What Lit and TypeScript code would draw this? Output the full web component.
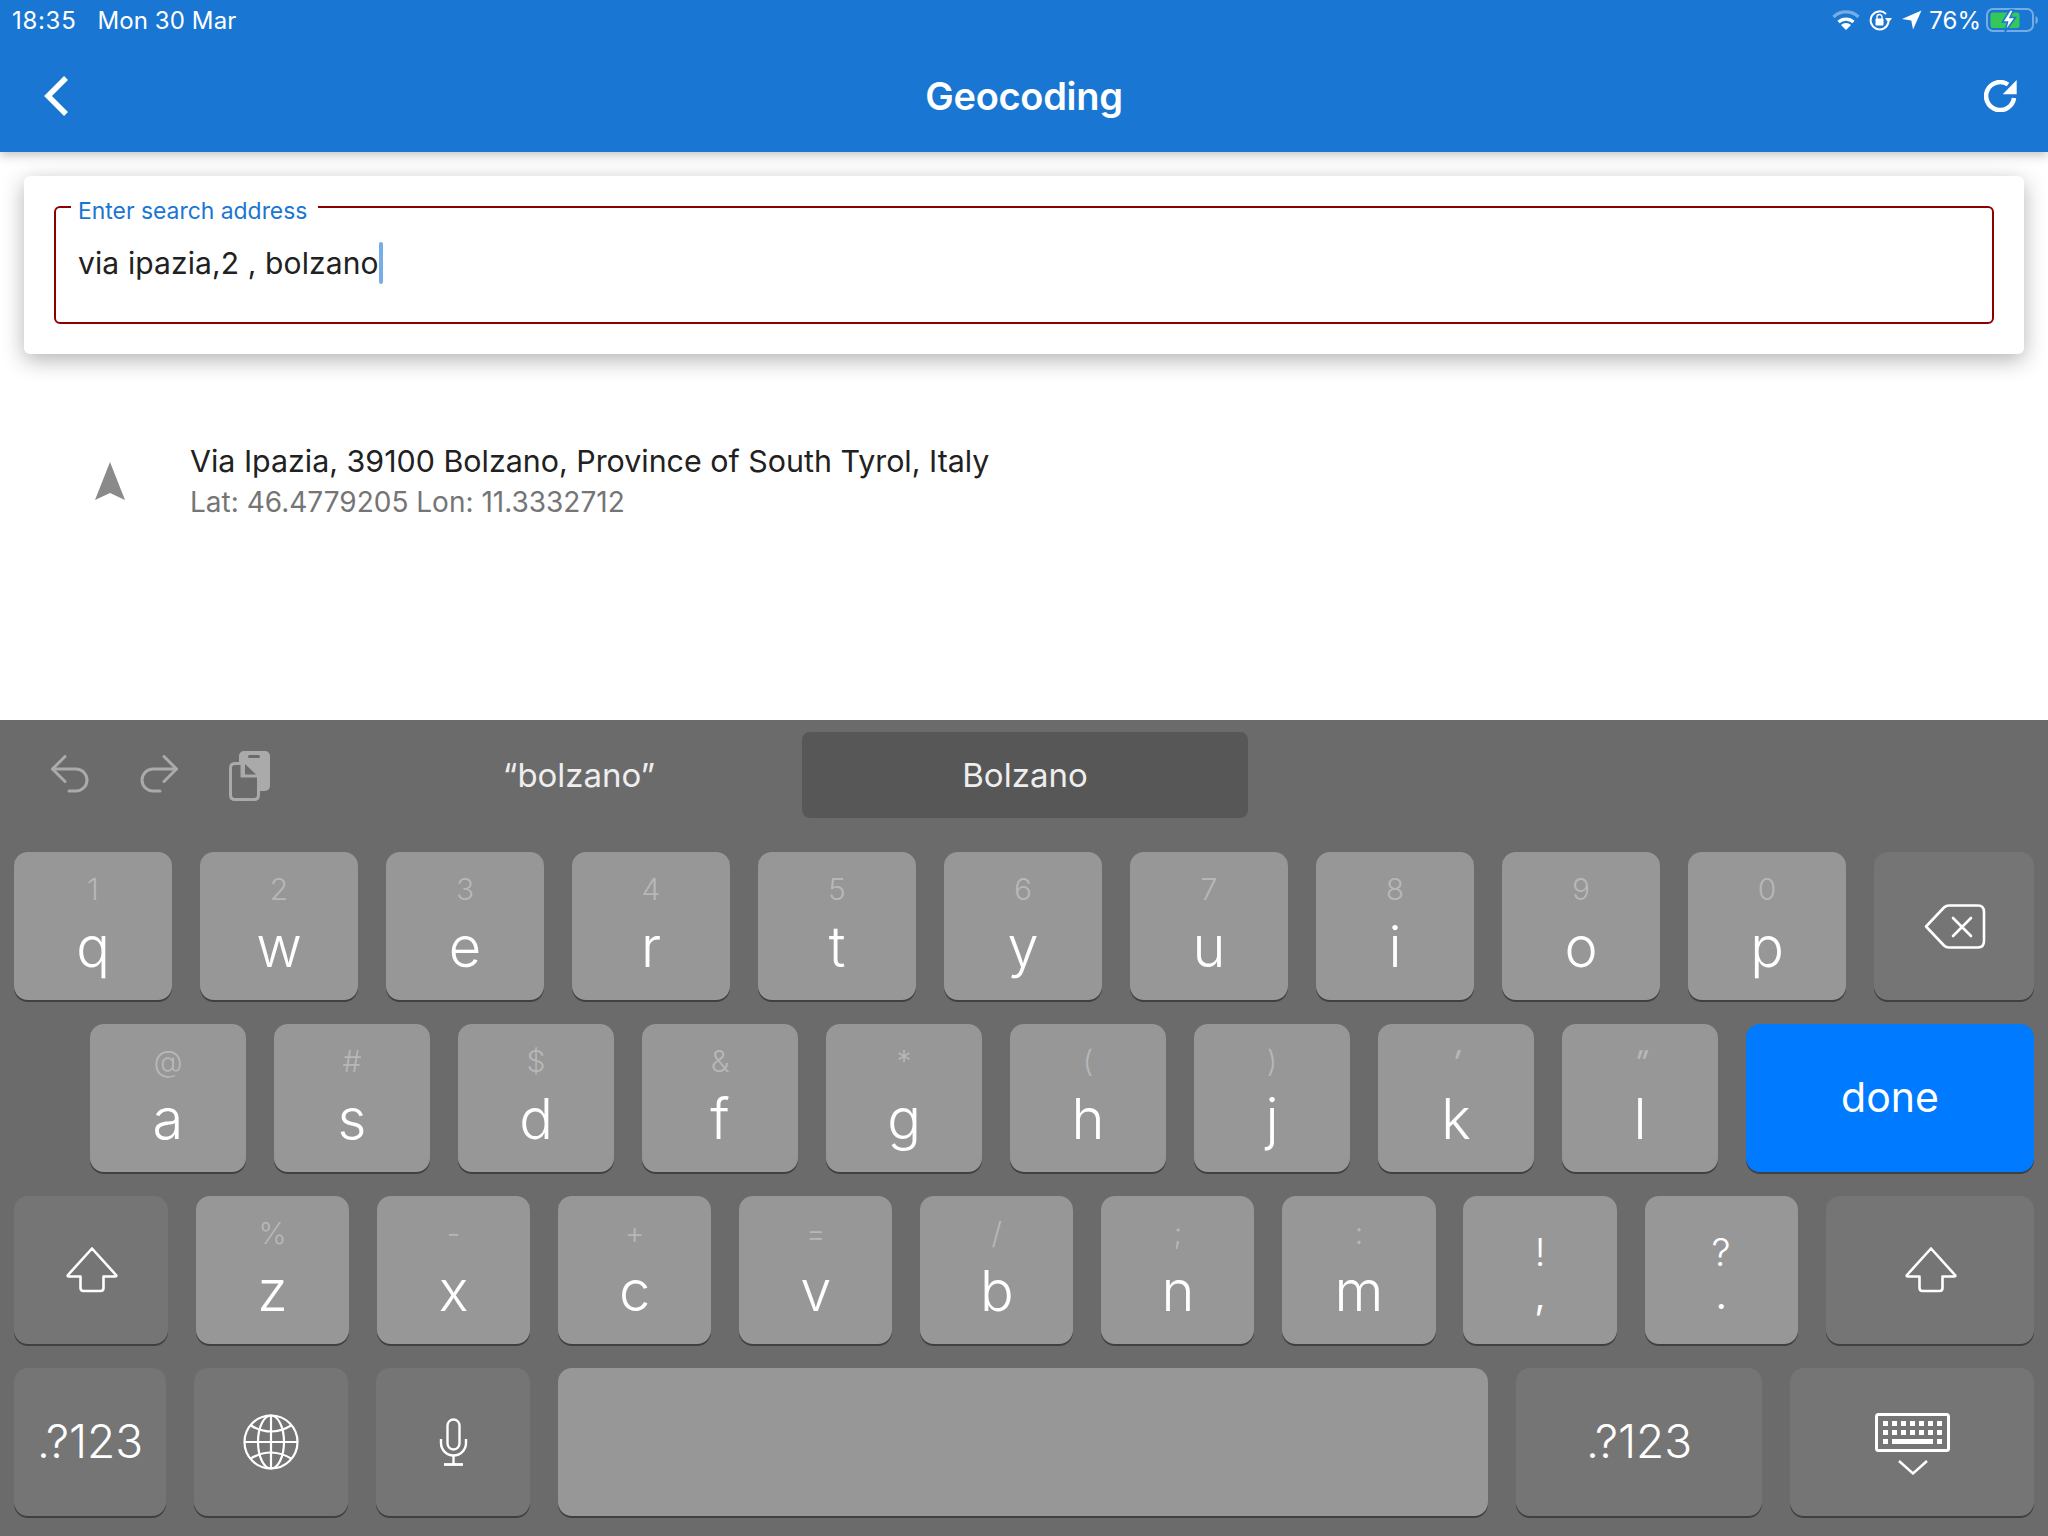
import { LitElement, html, css, svg } from 'lit';
import { customElement } from 'lit/decorators.js';

const ROW1 = [['1', 'q'], ['2', 'w'], ['3', 'e'], ['4', 'r'], ['5', 't'], ['6', 'y'], ['7', 'u'], ['8', 'i'], ['9', 'o'], ['0', 'p']];
const ROW2 = [['@', 'a'], ['#', 's'], ['$', 'd'], ['&', 'f'], ['*', 'g'], ['(', 'h'], [')', 'j'], ["'", 'k'], ['"', 'l']];
const ROW3 = [['%', 'z'], ['-', 'x'], ['+', 'c'], ['=', 'v'], ['/', 'b'], [';', 'n'], [':', 'm']];

const shiftIcon = html`<svg class="shift" width="52" height="46" viewBox="0 0 52 46" fill="none" stroke="#fff" stroke-width="2.6" stroke-linejoin="round">
  <path d="M26 1.5 L50 28 Q51 29.5 49 29.5 H37.5 V41 Q37.5 44 34.5 44 H17.5 Q14.5 44 14.5 41 V29.5 H3 Q1 29.5 2 28 Z" />
</svg>`;

const keyboardDots = [0, 1, 2, 3, 4, 5, 6].flatMap((i) => [
  svg`<rect x=${8 + i * 9} y="8" width="5" height="5" />`,
  svg`<rect x=${8 + i * 9} y="17" width="5" height="5" />`,
]);

@customElement('app-root')
export class AppRoot extends LitElement {
  static styles = css`
    :host {
      display: block;
      font-family: Inter, 'Liberation Sans', sans-serif;
    }

    .page {
      display: flex;
      flex-direction: column;
      height: 1536px;
      background: #fff;
    }

    /* app bar */
    .appbar {
      position: relative;
      height: 152px;
      background: #1976d2;
      color: #fff;
      box-shadow: 0 3px 10px rgba(0, 0, 0, 0.25);
    }
    .status {
      display: flex;
      align-items: center;
      height: 40px;
      padding: 0 10px 0 12px;
      font-size: 24px;
      letter-spacing: 0.1px;
    }
    .status .time {
      letter-spacing: 0.7px;
    }
    .status .date {
      margin-left: 21px;
    }
    .status .right {
      display: flex;
      align-items: center;
      margin-left: auto;
    }
    .status .pct {
      margin: 0 5px 0 7px;
      letter-spacing: 0;
    }
    .status .lock {
      margin-left: 9px;
    }
    .status .loc {
      margin-left: 10px;
    }
    .toolbar {
      display: grid;
      grid-template-columns: 1fr auto 1fr;
      align-items: center;
      height: 112px;
      padding: 0 31px;
    }
    .toolbar .back {
      margin-left: 13px;
    }
    .toolbar .title {
      font-size: 38px;
      font-weight: 600;
      letter-spacing: -0.3px;
    }
    .toolbar .refresh {
      justify-self: end;
    }
    svg {
      display: block;
    }

    /* search */
    .body {
      flex: 1;
    }
    .card {
      margin: 24px 24px 0;
      padding: 30px;
      height: 178px;
      box-sizing: border-box;
      background: #fff;
      border-radius: 6px;
      box-shadow: 0 6px 22px rgba(0, 0, 0, 0.3);
    }
    .field {
      position: relative;
      display: flex;
      align-items: center;
      height: 118px;
      box-sizing: border-box;
      padding: 0 22px;
      border: 2px solid #8b0000;
      border-radius: 6px;
      font-size: 30px;
      letter-spacing: 0.12px;
      color: #212121;
    }
    .field .label {
      position: absolute;
      left: 15px;
      top: -12px;
      padding: 0 11px 0 7px;
      background: #fff;
      font-size: 22.9px;
      letter-spacing: 0;
      line-height: 30px;
      color: #1976d2;
    }
    .field .value {
      display: flex;
      align-items: center;
      margin-top: -4px;
    }
    .caret {
      width: 4px;
      height: 42px;
      border-radius: 2px;
      background: #78aee8;
    }

    .result {
      display: flex;
      align-items: center;
      margin-top: 87px;
      padding-left: 95px;
    }
    .result .nav {
      margin: 0 65px 0 0;
    }
    .result .name {
      font-size: 30.4px;
      line-height: 41px;
      color: #212121;
    }
    .result .coords {
      font-size: 28px;
      line-height: 40px;
      color: #757575;
    }

    /* keyboard */
    .keyboard {
      display: flex;
      flex-direction: column;
      gap: 24px;
      height: 816px;
      box-sizing: border-box;
      padding: 0 14px 20px;
      background: #6b6b6b;
      font-weight: 300;
      color: #fff;
    }
    .assist {
      display: flex;
      height: 108px;
      margin: 0 -14px;
      padding-top: 12px;
      box-sizing: border-box;
    }
    .assist .tools {
      position: relative;
      width: 356px;
    }
    .tools .undo {
      position: absolute;
      left: 51px;
      top: 23px;
    }
    .tools .redo {
      position: absolute;
      left: 139px;
      top: 23px;
    }
    .tools .paste {
      position: absolute;
      left: 229px;
      top: 19px;
    }
    .suggestion {
      display: flex;
      align-items: center;
      justify-content: center;
      width: 446px;
      height: 86px;
      border-radius: 8px;
      font-size: 33px;
      font-weight: 400;
      color: #eee;
    }
    .suggestion.active {
      background: #585757;
    }
    .row {
      display: grid;
      gap: 28px;
      height: 148px;
    }
    .row1 {
      grid-template-columns: repeat(10, 158px) 160px;
    }
    .row2 {
      grid-template-columns: repeat(9, 156px) 288px;
      padding-left: 76px;
    }
    .row3 {
      grid-template-columns: 154px repeat(9, 153.2px) 208.2px;
      gap: 27.9px;
    }
    .row4 {
      grid-template-columns: 152px 154px 154px 930px 246px 244px;
    }
    .key {
      display: flex;
      flex-direction: column;
      align-items: center;
      box-sizing: border-box;
      padding-top: 22px;
      border-radius: 14px;
      background: #979797;
      box-shadow: 0 2px 0 #404040;
    }
    .key .hint {
      height: 30px;
      font-size: 30px;
      line-height: 30px;
      color: rgba(255, 255, 255, 0.32);
    }
    .key .hint.slant {
      font-weight: 500;
      transform: skewX(-18deg);
    }
    .key .letter {
      height: 60px;
      margin-top: 13px;
      font-size: 56px;
      line-height: 60px;
    }
    .key.punct {
      padding-top: 35px;
      font-size: 38px;
      line-height: 42px;
    }
    .key.punct .low {
      margin-top: 1px;
      font-weight: 400;
    }
    .key.fn,
    .key.done {
      justify-content: center;
      padding-top: 0;
      padding-bottom: 2px;
      font-size: 46px;
    }
    .key.fn {
      background: #757575;
    }
    .key.done {
      background: #007aff;
      font-weight: 400;
      font-size: 41px;
    }
    .key.plain {
      background: #979797;
    }
    .shift {
      margin: 2px 0 0 2px;
    }
    .backspace {
      margin: 4px 0 0 2px;
    }
    .kbd-icon {
      display: flex;
      flex-direction: column;
      align-items: center;
      gap: 8px;
      margin: 5px 0 0 1px;
    }
    .globe,
    .mic {
      margin-top: 2px;
    }
  `;

  renderLetter([hint, letter]: string[]) {
    const slanted = hint === "'" || hint === '"';
    return html`<div class="key">
      <span class="hint ${slanted ? 'slant' : ''}">${hint}</span>
      <span class="letter">${letter}</span>
    </div>`;
  }

  renderStatus() {
    return html`<div class="status">
      <span class="time">18:35</span>
      <span class="date">Mon 30 Mar</span>
      <div class="right">
        <svg width="28" height="21" viewBox="0 0 28 21" fill="none" stroke="#fff" stroke-width="3.2">
          <path d="M1.5 7 A18 18 0 0 1 26.5 7" opacity="0.4" />
          <path d="M6.5 12 A11 11 0 0 1 21.5 12" />
          <path d="M14 20 L9 15 A7 7 0 0 1 19 15 Z" fill="#fff" stroke="none" />
        </svg>
        <svg class="lock" width="23" height="21" viewBox="0 0 23 21" fill="none" stroke="#fff" stroke-width="2">
          <path d="M19.5 12 A9 9 0 1 1 17 4" />
          <path d="M16 8 H23 L19.5 13 Z" fill="#fff" stroke="none" />
          <rect x="6.5" y="8.5" width="8" height="7" rx="1" fill="#fff" stroke="none" />
          <path d="M8 9 V7 A2.5 2.5 0 0 1 13 7 V9" stroke-width="1.4" />
        </svg>
        <svg class="loc" width="20" height="20" viewBox="0 0 19 19">
          <path d="M0 8.5 L18.5 0.5 L10.5 18.5 L8.8 10 Z" fill="#fff" />
        </svg>
        <span class="pct">76%</span>
        <svg width="52" height="26" viewBox="0 0 52 26" fill="none">
          <rect x="1" y="2" width="46" height="22" rx="6" stroke="#fff" stroke-opacity="0.4" stroke-width="2" />
          <rect x="4.5" y="5.5" width="29" height="15.5" rx="2.5" fill="#34c759" />
          <path d="M49.5 9 Q52 10 52 13 Q52 16 49.5 17 Z" fill="#fff" fill-opacity="0.4" />
          <path d="M24 3 L16.5 15 H21.5 L19 25 L29.5 10.5 H24 L27.5 3 Z" fill="#fff" stroke="#1976d2" stroke-width="1.5" />
        </svg>
      </div>
    </div>`;
  }

  render() {
    return html`<div class="page">
      <header class="appbar">
        ${this.renderStatus()}
        <div class="toolbar">
          <svg class="back" width="24" height="40" viewBox="0 0 24 40" fill="none" stroke="#fff" stroke-width="5.5">
            <path d="M22 2 L4 20 L22 38" />
          </svg>
          <span class="title">Geocoding</span>
          <svg class="refresh" width="33" height="32" viewBox="0 0 33 32" fill="none">
            <path d="M24 4.5 A14 14 0 1 0 30 18" stroke="#fff" stroke-width="4.5" />
            <path d="M32.7 0 V14.3 H18.7 Z" fill="#fff" />
          </svg>
        </div>
      </header>

      <main class="body">
        <div class="card">
          <div class="field">
            <span class="label">Enter search address</span>
            <div class="value"><span>via ipazia,2 , bolzano</span><span class="caret"></span></div>
          </div>
        </div>
        <div class="result">
          <svg class="nav" width="30" height="40" viewBox="0 0 30 40">
            <path d="M15 0 L30 38 L15 31 L0 38 Z" fill="#8a8a8a" />
          </svg>
          <div>
            <div class="name">Via Ipazia, 39100 Bolzano, Province of South Tyrol, Italy</div>
            <div class="coords">Lat: 46.4779205 Lon: 11.3332712</div>
          </div>
        </div>
      </main>

      <section class="keyboard">
        <div class="assist">
          <div class="tools">
            <svg class="undo" width="39" height="38" viewBox="0 0 39 38" fill="none" stroke="#aaa" stroke-width="3" stroke-linecap="round" stroke-linejoin="round">
              <path d="M14 1.5 L1.5 14 L14 26.5" />
              <path d="M1.5 14 H25 A11 11 0 0 1 25 36 H18" />
            </svg>
            <svg class="redo" width="39" height="38" viewBox="0 0 39 38" fill="none" stroke="#aaa" stroke-width="3" stroke-linecap="round" stroke-linejoin="round">
              <path d="M25 1.5 L37.5 14 L25 26.5" />
              <path d="M37.5 14 H14 A11 11 0 0 0 14 36 H21" />
            </svg>
            <svg class="paste" width="42" height="51" viewBox="0 0 42 51">
              <rect x="10" y="0" width="31" height="40" rx="5" fill="#aaa" />
              <rect x="19" y="4" width="12" height="3" rx="1.5" fill="#6b6b6b" />
              <path d="M13 12.5 H6 Q1.5 12.5 1.5 17 V44 Q1.5 48.5 6 48.5 H25 Q29.5 48.5 29.5 44 V25 H13 Z" fill="#6b6b6b" stroke="#aaa" stroke-width="3" />
              <path d="M16 13 L27 23.5 H16 Z" fill="#6b6b6b" />
            </svg>
          </div>
          <div class="suggestion">“bolzano”</div>
          <div class="suggestion active">Bolzano</div>
        </div>

        <div class="row row1">
          ${ROW1.map((k) => this.renderLetter(k))}
          <div class="key fn">
            <svg class="backspace" width="62" height="46" viewBox="0 0 62 46" fill="none" stroke="#fff" stroke-width="2.6" stroke-linejoin="round" stroke-linecap="round">
              <path d="M2 22.5 L20 3.5 Q22 1.5 25 1.5 H54 Q60 1.5 60 8 V37 Q60 43.5 54 43.5 H25 Q22 43.5 20 41.5 Z" />
              <path d="M29 14 L47 32 M47 14 L29 32" />
            </svg>
          </div>
        </div>

        <div class="row row2">
          ${ROW2.map((k) => this.renderLetter(k))}
          <div class="key done">done</div>
        </div>

        <div class="row row3">
          <div class="key fn">${shiftIcon}</div>
          ${ROW3.map((k) => this.renderLetter(k))}
          <div class="key punct"><span>!</span><span class="low">,</span></div>
          <div class="key punct"><span>?</span><span class="low">.</span></div>
          <div class="key fn">${shiftIcon}</div>
        </div>

        <div class="row row4">
          <div class="key fn">.?123</div>
          <div class="key fn">
            <svg class="globe" width="56" height="56" viewBox="0 0 56 56" fill="none" stroke="#fff" stroke-width="2.2">
              <circle cx="28" cy="28" r="26.5" />
              <ellipse cx="28" cy="28" rx="13" ry="26.5" />
              <path d="M28 1.5 V54.5 M1.5 28 H54.5" />
              <path d="M7 11 Q28 24 49 11 M7 45 Q28 32 49 45" />
            </svg>
          </div>
          <div class="key fn">
            <svg class="mic" width="29" height="48" viewBox="0 0 29 48" fill="none" stroke="#fff" stroke-width="2.4">
              <rect x="8.5" y="1.5" width="12" height="30" rx="6" />
              <path d="M2 21 V25 A12.5 12.5 0 0 0 27 25 V21" />
              <path d="M14.5 38 V46" />
              <path d="M5 46.5 H24" stroke-width="2.8" />
            </svg>
          </div>
          <div class="key plain"></div>
          <div class="key fn">.?123</div>
          <div class="key fn">
            <div class="kbd-icon">
              <svg width="75" height="39" viewBox="0 0 75 39" fill="#fff">
                <rect x="1.5" y="1.5" width="72" height="36" rx="2" fill="none" stroke="#fff" stroke-width="3" />
                ${keyboardDots}
                <rect x="8" y="26" width="5" height="5" />
                <rect x="17" y="26" width="41" height="5" />
                <rect x="62" y="26" width="5" height="5" />
              </svg>
              <svg width="30" height="15" viewBox="0 0 30 15" fill="none" stroke="#fff" stroke-width="2.4">
                <path d="M1 1 L15 13.5 L29 1" />
              </svg>
            </div>
          </div>
        </div>
      </section>
    </div>`;
  }
}
